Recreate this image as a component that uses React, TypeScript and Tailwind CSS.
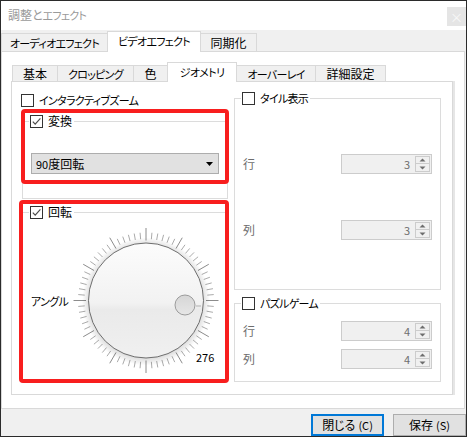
import React from "react";

const FONT = "font-['Noto_Sans_CJK_JP','Noto_Sans',sans-serif] [font-feature-settings:'palt']";
// katakana in the reference font is much narrower than Noto's
const KANA = "text-[11px] tracking-[-0.7px] whitespace-nowrap";

function CheckBox({ checked = false }: { checked?: boolean }) {
  return (
    <span className="w-[13px] h-[13px] border border-[#333333] bg-white flex items-center justify-center shrink-0">
      {checked && (
        <svg width="11" height="11" viewBox="0 0 11 11">
          <path d="M1.8 5.6 L4.2 8.2 L9.4 2.4" fill="none" stroke="#4d4d4d" strokeWidth="1.2" />
        </svg>
      )}
    </span>
  );
}

function Legend({ label, checked, kana }: { label: string; checked?: boolean; kana?: boolean }) {
  return (
    <legend className="ml-[6px] pl-[1px] pr-[2px]">
      <span className="flex items-center gap-[5px] h-[14px]">
        <CheckBox checked={checked} />
        <span className={kana ? KANA : ""}>{label}</span>
      </span>
    </legend>
  );
}

function Arrow({ up }: { up?: boolean }) {
  return (
    <svg width="7" height="4" viewBox="0 0 7 4">
      <path d={up ? "M0.5 3.5 L3.5 0.5 L6.5 3.5 Z" : "M0.5 0.5 L3.5 3.5 L6.5 0.5 Z"} fill="#6d6d6d" />
    </svg>
  );
}

function Spin({ value }: { value: string }) {
  return (
    <div className="w-[91px] h-[20px] border border-[#cccccc] bg-[#f0f0f0] flex items-center">
      <span className="flex-1 text-right pr-[5px] text-[#6d6d6d] text-[11px]">{value}</span>
      <div className="w-[15px] h-[16px] mr-[1px] flex flex-col">
        <div className="h-[8px] border border-[#cccccc] flex items-center justify-center">
          <Arrow up />
        </div>
        <div className="h-[8px] border border-t-0 border-[#cccccc] flex items-center justify-center">
          <Arrow />
        </div>
      </div>
    </div>
  );
}

function SpinRow({ label, value, className = "" }: { label: string; value: string; className?: string }) {
  return (
    <div className={`flex items-center justify-between pl-[8px] pr-[8px] ${className}`}>
      <span className="text-[#6d6d6d]">{label}</span>
      <Spin value={value} />
    </div>
  );
}

function Knob() {
  const cx = 75;
  const cy = 74.5;
  const ticks = Array.from({ length: 72 }, (_, i) => {
    const a = (i * 5 * Math.PI) / 180;
    const major = i % 6 === 0;
    const r1 = major ? 60 : 61.5;
    const r2 = major ? 72.5 : 68;
    return (
      <line
        key={i}
        x1={cx + r1 * Math.sin(a)}
        y1={cy - r1 * Math.cos(a)}
        x2={cx + r2 * Math.sin(a)}
        y2={cy - r2 * Math.cos(a)}
        stroke={major ? "#8c8c8c" : "#ababab"}
        strokeWidth="1"
      />
    );
  });
  return (
    <svg width="150" height="150" viewBox="0 0 150 150">
      <defs>
        <radialGradient id="halo" cx="50%" cy="50%" r="50%">
          <stop offset="88%" stopColor="#000" stopOpacity="0.14" />
          <stop offset="100%" stopColor="#000" stopOpacity="0" />
        </radialGradient>
        <linearGradient id="face" x1="0" y1="0" x2="0" y2="1">
          <stop offset="0%" stopColor="#fcfcfc" />
          <stop offset="52%" stopColor="#f2f2f2" />
          <stop offset="58%" stopColor="#eaeaea" />
          <stop offset="100%" stopColor="#f0f0f0" />
        </linearGradient>
        <linearGradient id="dot" x1="0" y1="0" x2="0" y2="1">
          <stop offset="0%" stopColor="#d6d6d6" />
          <stop offset="100%" stopColor="#e6e6e6" />
        </linearGradient>
      </defs>
      {ticks}
      <circle cx={cx} cy={cy + 1} r="64" fill="url(#halo)" />
      <circle cx={cx} cy={cy} r="57.5" fill="url(#face)" stroke="#6e6e6e" strokeWidth="1" />
      <rect x={cx + 50} y={cy + 4.5} width="5" height="2" fill="#cfcfcf" />
      <circle cx={cx + 39} cy={cy + 4.5} r="10" fill="url(#dot)" stroke="#9b9b9b" strokeWidth="1" />
    </svg>
  );
}

function OuterTab({ label, w, active, first, kana }: { label: string; w: string; active?: boolean; first?: boolean; kana?: boolean }) {
  const text = <span className={kana ? KANA : ""}>{label}</span>;
  if (active) {
    return (
      <div className={`${w} h-[21px] -mb-px relative z-10 bg-white border-t border-l border-r border-[#d9d9d9] flex items-center justify-center pb-[2px]`}>
        {text}
      </div>
    );
  }
  return (
    <div className={`${w} h-[18px] bg-[#f0f0f0] border-t border-[#d9d9d9] ${first ? "border-l" : "border-r"} flex items-center justify-center`}>
      {text}
    </div>
  );
}

export default function App() {
  return (
    <div className={`w-[467px] h-[437px] border border-[#2b2b2b] bg-white flex flex-col overflow-hidden text-[12px] leading-[14px] text-black ${FONT}`}>
      <div className="h-[29px] shrink-0 flex items-start justify-between">
        <span className="pl-[7px] mt-[7px] text-[#9a9a9a]">
          調整と<span className={KANA}>エフェクト</span>
        </span>
        <span className="mt-[6px] w-[19px] h-[19px] bg-[#e5e5e5] text-[#f8f8f8] flex items-center justify-center text-[13px]">×</span>
      </div>

      <div className="flex-1 bg-[#f0f0f0] flex flex-col pt-[1px]">
        <div className="h-[20px] flex items-end">
          <OuterTab label="オーディオエフェクト" w="w-[106px]" first kana />
          <OuterTab label="ビデオエフェクト" w="w-[94px]" active kana />
          <OuterTab label="同期化" w="w-[56px]" />
        </div>

        <div className="h-[358px] mr-[1px] border border-[#d9d9d9] bg-white">
          <div className="mt-[10px] ml-[9px] pl-[1px] h-[19px] flex items-end">
            <div className="w-[45px] h-[16px] bg-[#f0f0f0] border-t border-l border-[#d9d9d9] flex items-center justify-center">基本</div>
            <div className="w-[76px] h-[16px] bg-[#f0f0f0] border-t border-l border-[#d9d9d9] flex items-center justify-center">
              <span className={KANA}>クロッピング</span>
            </div>
            <div className="w-[34px] h-[16px] bg-[#f0f0f0] border-t border-l border-[#d9d9d9] flex items-center justify-center">色</div>
            <div className="w-[70px] h-[20px] -mb-px relative z-10 bg-white border-t border-l border-r border-[#d9d9d9] flex items-center justify-center pb-[2px]">
              <span className={KANA}>ジオメトリ</span>
            </div>
            <div className="w-[79px] h-[16px] bg-[#f0f0f0] border-t border-r border-[#d9d9d9] flex items-center justify-center">
              <span className={KANA}>オーバーレイ</span>
            </div>
            <div className="w-[70px] h-[16px] bg-[#f0f0f0] border-t border-r border-[#d9d9d9] flex items-center justify-center">詳細設定</div>
          </div>

          <div className="ml-[9px] w-[442px] h-[314px] border border-[#d9d9d9] shadow-[2px_0_0_#e6e6e6] bg-white relative flex pl-[9px]">
            <div className="w-[207px] pt-[11px] flex flex-col">
              <div className="flex items-center gap-[5px] h-[14px]">
                <CheckBox />
                <span className={KANA}>インタラクティブズーム</span>
              </div>

              <fieldset className="mt-[7px] ml-[1px] w-[206px] h-[85px] border border-[#dcdcdc]">
                <Legend label="変換" checked />
                <div className="mt-[25px] ml-[8px] w-[188px] h-[21px] bg-[#e1e1e1] border border-[#adadad] flex items-center justify-between pl-[4px] pr-[5px]">
                  <span>
                    <span className="text-[11px]">90</span>度回転
                  </span>
                  <svg width="7" height="4" viewBox="0 0 7 4">
                    <path d="M0 0 L7 0 L3.5 4 Z" fill="#000" />
                  </svg>
                </div>
              </fieldset>

              <fieldset className="mt-[6px] ml-[1px] w-[206px] h-[177px] border border-[#dcdcdc]">
                <Legend label="回転" checked />
                <div className="mt-[7px] flex items-center">
                  <span className="w-[48px] pl-[8px] text-[11px] tracking-[-0.7px] whitespace-nowrap">アングル</span>
                  <div className="relative w-[150px] h-[150px]">
                    <Knob />
                    <span className="absolute left-[125px] top-[124px] text-[11px]">276</span>
                  </div>
                </div>
              </fieldset>
            </div>

            <div className="ml-[6px] w-[207px] pt-[9px] flex flex-col">
              <fieldset className="w-[207px] h-[199px] border border-[#dcdcdc]">
                <Legend label="タイル表示" kana />
                <SpinRow label="行" value="3" className="mt-[49px]" />
                <SpinRow label="列" value="3" className="mt-[46px]" />
              </fieldset>

              <fieldset className="mt-[6px] w-[207px] h-[86px] border border-[#dcdcdc]">
                <Legend label="パズルゲーム" kana />
                <SpinRow label="行" value="4" className="mt-[11px]" />
                <SpinRow label="列" value="4" className="mt-[8px]" />
              </fieldset>
            </div>

            <div className="absolute left-[9px] top-[27px] w-[208px] h-[75px] border-[4px] border-[#f81e1e] rounded-[4px]" />
            <div className="absolute left-[7px] top-[118px] w-[210px] h-[183px] border-[4px] border-[#f81e1e] rounded-[4px]" />
          </div>
        </div>

        <div className="flex-1 flex justify-end items-start pt-[5px] gap-[9px]">
          <button className="w-[73px] h-[22px] border-2 border-[#0078d7] bg-[#e1e1e1] flex items-center justify-center">
            閉じる <span className="ml-[3px] text-[11px]">(C)</span>
          </button>
          <button className="w-[73px] h-[22px] border border-[#adadad] bg-[#e1e1e1] flex items-center justify-center">
            保存 <span className="ml-[3px] text-[11px]">(S)</span>
          </button>
        </div>
      </div>
    </div>
  );
}
